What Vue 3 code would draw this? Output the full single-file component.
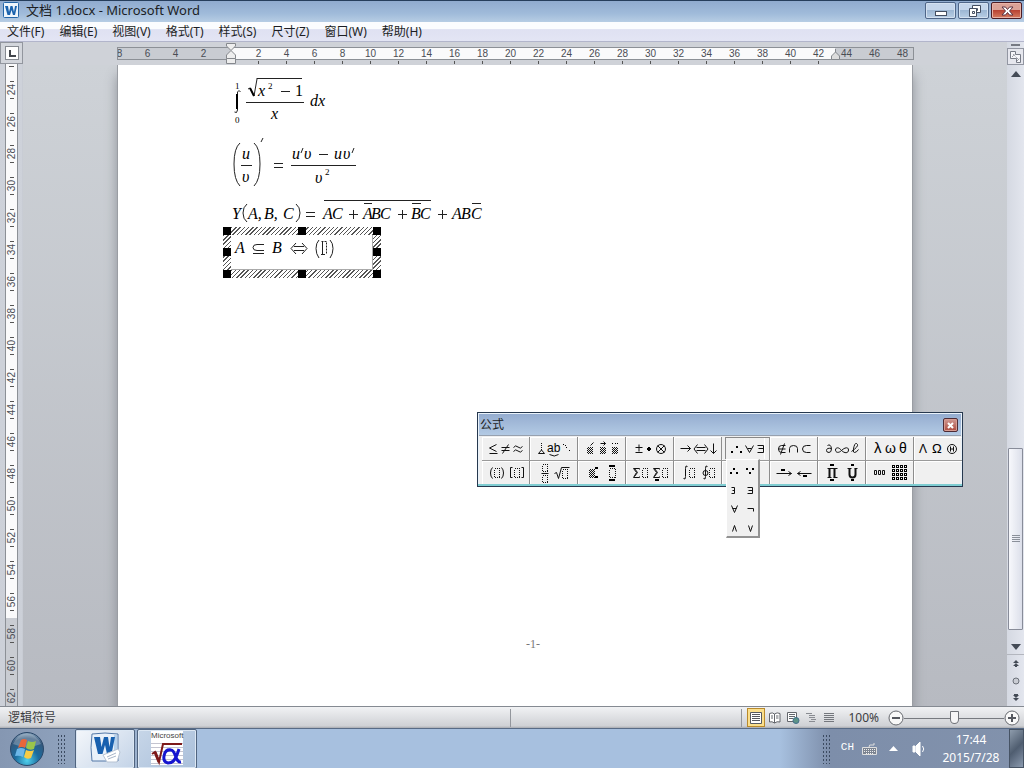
<script setup>
import { ref } from 'vue'

const menus = ['文件(F)', '编辑(E)', '视图(V)', '格式(T)', '样式(S)', '尺寸(Z)', '窗口(W)', '帮助(H)']
const leftMarks = [8, 6, 4, 2]
const rightMarks = Array.from({ length: 24 }, (_, i) => (i + 1) * 2)
const sideMarks = Array.from({ length: 20 }, (_, i) => 24 + i * 2)
const zoom = ref(50)

// Each icon: line (stroked path), fill (solid path), slots (dotted boxes), shade (checkered boxes), text
const tools = [
  { name: '关系符号', line: 'M14 7L7 10.500L14 14M7 16H15M19 10H27M19 13H27M26 7L20 16M31 10Q33 7 35.500 9.500T40 9M31 14Q33 11 35.500 13.500T40 13' },
  { name: '间距和省略号', line: 'M8 16H14L11 12.500ZM19 17Q24 20 28 17', dash: 'M11 5V12', fill: 'M33 7h1v1h-1zM36 10h1v1h-1zM39 13h1v1h-1zM35 8h1v1h-1z', text: [[17, 15, 12, 'ab']] },
  { name: '修饰符号', shade: [[9, 10, 6, 7], [22, 10, 6, 7], [34, 10, 6, 7]], line: 'M12 8L15 5M22 6H27M25 4L27 6L25 8', fill: 'M34 6h1v1h-1zM37 6h1v1h-1zM39 6h1v1h-1z' },
  { name: '运算符号', line: 'M9 10H16M12.500 7V14M9 15H16M31 8L38 15M38 8L31 15M30 11.500A4.500 4.500 0 1 0 39 11.500A4.500 4.500 0 1 0 30 11.500', fill: 'M22 10h2v1h1v2h-1v1h-2v-1h-1v-2h1z' },
  { name: '箭头符号', line: 'M6 11H16M13 8L16 11L13 14M22 10H31M22 13H31M23 7L19.500 11.500L23 16M30 7L33.500 11.500L30 16M39 6V16M36 13L39 16L42 13' },
  { name: '逻辑符号', active: true, fill: 'M9 14h2v2h-2zM14 9h2v2h-2zM18 14h2v2h-2z', line: 'M23 8L27 15L31 8M25 11H29M35 8H41V15H35M36 11H41' },
  { name: '集合论符号', line: 'M15 8H11Q8 8 8 11.500T11 15H15M8 11.500H15M14 6L10 17M19 15V11Q19 8 23 8T27 11V15M40 8H36Q32 8 32 11.500T36 15H40' },
  { name: '其他符号', line: 'M9 8Q12 6 13 11Q13 15 10.500 15T8 13Q8 10 13 11M23 13C20 9 17 10 17 12.500S20 16 23 13S30 9 30 12.500S26 16 23 13M33 14Q40 9 39 7Q37 4 35.500 9Q34 15 36 15T40 12' },
  { name: '小写希腊字母', text: [[8, 16, 15, 'λ'], [19, 16, 14, 'ω'], [33, 16, 14, 'θ']] },
  { name: '大写希腊字母', text: [[5, 16, 12, 'Λ'], [18, 16, 13, 'Ω']], line: 'M33 11.500A4.500 4.500 0 1 0 42 11.500A4.500 4.500 0 1 0 33 11.500M36 9V14M39 9V14M36 11.500H39' },
  { name: '围栏模板', slots: [[12, 7, 5, 9], [32, 7, 5, 9]], line: 'M10 6Q8 8 8 11.500T10 17M19 6Q21 8 21 11.500T19 17M30 6H28V16H30M39 6H41V16H39' },
  { name: '分式和根式模板', slots: [[12, 3, 5, 7], [12, 14, 5, 7], [32, 8, 5, 9]], line: 'M11 12H18M24 12L26 11L28 17L31 6H39' },
  { name: '上标和下标模板', shade: [[11, 8, 6, 9]], slots: [[31, 7, 6, 9]], fill: 'M17 6h3v2h-3zM17 15h3v2h-3zM31 4h6v2h-6zM31 18h6v2h-6z' },
  { name: '求和模板', slots: [[16, 7, 5, 9], [36, 7, 5, 9]], line: 'M13 8V7H7L10 11L7 16H13V15M33 8V7H27L30 11L27 16H33V15M8 7L11 11L8 15M28 7L31 11L28 15', fill: 'M29 18h4v2h-4z' },
  { name: '积分模板', slots: [[15, 7, 5, 9], [35, 7, 5, 9]], line: 'M13 5Q11 3 11 7V15Q11 19 9 17M33 5Q31 3 31 7V15Q31 19 29 17M28.500 11.500A2.500 2.500 0 1 0 33.500 11.500A2.500 2.500 0 1 0 28.500 11.500' },
  { name: '底线和顶线模板' },
  { name: '标签箭头模板', line: 'M6 12H21M18 10L21 12L18 14M27 12H41M30 10L27 12L30 14', fill: 'M11 8h4v2h-4zM33 14h4v2h-4z' },
  { name: '乘积和集合论模板', bold: 'M11 7V16M16 7V16M31 7V13Q31 16 34 16T37 13V7', line: 'M9 7H19M9 16H13M15 16H19M29 7H33M36 7H39', fill: 'M12 3h4v2h-4zM12 18h4v2h-4zM33 3h3v2h-3zM33 18h3v2h-3z' },
  { name: '矩阵模板', line: 'M8 9H10V13H8ZM12 9H14V13H12ZM16 9H18V13H16Z', grid: true },
  { name: '空白模板' }
]

const logic = [
  { name: '所以', fill: 'M3 12h2v2h-2zM6 8h2v2h-2zM9 12h2v2h-2z' },
  { name: '因为', fill: 'M3 8h2v2h-2zM6 12h2v2h-2zM9 8h2v2h-2z' },
  { name: '使得', line: 'M4 8H7V14H4M5 11H7' },
  { name: '存在', line: 'M4 8H9V14H4M5 11H9' },
  { name: '任意', line: 'M4 7L7 14L10 7M5 10H9' },
  { name: '非', line: 'M4 10H10V13' },
  { name: '与', line: 'M5 14L7 8L9 14' },
  { name: '或', line: 'M5 8L7 14L9 8' }
]
const cells = Array.from({ length: 16 }, (_, i) => ({ x: 26 + (i % 4) * 4, y: 4 + Math.floor(i / 4) * 4 }))
</script>

<template>
  <div class="desktop">
    <header class="titlebar">
      <svg class="wicon" width="16" height="16" viewBox="0 0 16 16" aria-hidden="true">
        <rect x="0.500" y="0.500" width="15" height="15" rx="1" fill="#eef5fc" stroke="#2466a8" />
        <path d="M2 4H5L6 10L7.500 4H9.500L11 10L12 4H14L12 13H10L8.500 8L7 13H4.500Z" fill="#1b63ae" />
      </svg>
      <h1>文档 1.docx - Microsoft Word</h1>
      <div class="winbtns">
        <button aria-label="最小化"><svg width="30" height="16"><rect x="9.500" y="8.500" width="11" height="4" fill="#fff" stroke="#444e61" /></svg></button>
        <button aria-label="还原"><svg width="30" height="16" fill="#fff" stroke="#444e61"><path d="M13.500 2.500H21.500V9.500H13.500Z" /><path d="M16.500 5.500H18.500V7.500H16.500Z" /><path d="M10.500 5.500H17.500V13.500H10.500Z" /><path d="M13.500 8.500H15.500V10.500H13.500Z" /></svg></button>
        <button class="close" aria-label="关闭"><svg width="30" height="16"><path d="M10 4H13.500L15.500 6.500L17.500 4H21L17.500 8L21 12H17.500L15.500 9.500L13.500 12H10L13.500 8Z" fill="#fff" stroke="#5b3240" /></svg></button>
      </div>
    </header>

    <nav class="menubar"><button v-for="m in menus" :key="m">{{ m }}</button></nav>

    <main class="work">
      <div class="corner"><button aria-label="制表符"><svg width="12" height="12"><path d="M4 3V9H10" fill="none" stroke="#42464c" stroke-width="2" /></svg></button></div>

      <div class="hruler">
        <div class="hscale">
          <div class="neg"><span v-for="n in leftMarks" :key="n">{{ n }}</span></div>
          <div class="pos"><span v-for="n in rightMarks" :key="n">{{ n }}</span></div>
          <svg class="indent" width="12" height="22" viewBox="0 0 12 22" stroke="#85888d" fill="#eee"><path d="M1.500 .5H10.500V3L6 7.500L1.500 3Z" /><path d="M1.500 15.500V12L6 7.500L10.500 12V15.500Z" /><path d="M1.500 15.500H10.500V20.500H1.500Z" /></svg>
          <svg class="indent end" width="12" height="12" viewBox="0 0 12 12" stroke="#85888d" fill="#ddd"><path d="M5.500 0V3L9.500 7V10.500H1.500V7L5.500 3" /></svg>
        </div>
      </div>

      <div class="vruler"><div class="vscale">
        <span v-for="n in sideMarks" :key="n" :class="{ off: n > 56 }"><b>{{ n }}</b></span>
      </div></div>

      <section class="canvas">
        <article class="page">
          <svg class="eq" width="110" height="50" viewBox="230 76 110 50">
            <g class="m"><text x="258" y="96">x</text><text x="271" y="119">x</text><text x="310" y="106">dx</text></g>
            <g class="r"><text x="295" y="96">1</text></g>
            <g class="s"><text x="235" y="89">1</text><text x="235" y="123">0</text><text x="268" y="89">2</text></g>
            <path class="ln" d="M246 102.500H304M256.500 78.500H302M281 91.500H290" />
            <path class="ln" d="M248 89L250 88L254 96L257 79" /><path class="thick" d="M250 88L254 96" />
            <path class="ln" d="M240.500 92Q239 89 237.500 92V110Q237 114 234.500 112" /><path class="thick" d="M237 94V109" />
          </svg>
          <svg class="eq second" width="140" height="56" viewBox="230 134 140 56">
            <g class="m"><text x="242" y="159">u</text><text x="242" y="182">υ</text><text x="292" y="159">u</text><text x="304" y="159">υ</text><text x="334" y="159">u</text><text x="343" y="159">υ</text><text x="315" y="183">υ</text></g>
            <g class="s"><text x="325" y="175">2</text></g>
            <path class="ln" d="M241 165.500H252M291 165.500H356M274 163.500H283M274 167.500H283M319 154.500H328" />
            <path class="ln" d="M240 143Q234 148 234 164T240 186M254 143Q260 148 260 164T254 186M263 138L261 142M303 148L301 153M354 148L352 153" />
          </svg>
          <svg class="eq third" width="260" height="30" viewBox="230 196 260 30">
            <g class="m"><text x="232" y="219">Y</text><text x="248" y="219">A,</text><text x="264" y="219">B,</text><text x="283" y="219">C</text><text x="323" y="219">A</text><text x="332" y="219">C</text><text x="363" y="219">A</text><text x="371" y="219">B</text><text x="380" y="219">C</text><text x="411" y="219">B</text><text x="420" y="219">C</text><text x="452" y="219">A</text><text x="461" y="219">B</text><text x="471" y="219">C</text></g>
            <path class="ln" d="M324 200.500H431M364 203.500H372M412 203.500H421M472 203.500H481M306 212.500H315M306 216.500H315M349 214.500H358M353.500 210V219M398 214.500H407M402.500 210V219M438 214.500H447M442.500 210V219" />
            <path class="ln" d="M247 204Q243 207 243 213T247 222M296 204Q300 207 300 213T296 222" />
          </svg>
          <div class="frame">
            <div class="inner">
              <svg width="120" height="30" viewBox="231 235 120 30">
                <g class="m"><text x="235" y="253">A</text><text x="272" y="253">B</text></g>
                <path class="ln" d="M264 244.500H257Q253 244.500 253 247.500T257 250.500H264M253 253.500H264M294 246.500H304M294 250.500H304M296 243L291 248.500L296 254M302 243L307 248.500L302 254M319 240Q316 243 316 248.500T319 258M330 240Q333 243 333 248.500T330 258M322.500 241V254M321 254.500H325" />
                <path class="ln" stroke-dasharray="2 1" d="M321.500 241.500H326.500V254" />
              </svg>
            </div>
            <i v-for="h in 8" :key="h" :class="'h' + h"></i>
          </div>
          <footer>-1-</footer>
        </article>
      </section>

      <aside class="scroll">
        <span class="split"></span>
        <button class="rulerbtn" aria-label="标尺"><svg width="14" height="14" fill="#f6f6fa" stroke="#777b86"><path d="M1.500 1.500H6.500V4.500H11.500V12.500H7.500V8.500H1.500Z" /><path d="M4 4L10 10M3 7L7 3M8 11L11 8" stroke-dasharray="1 1" /></svg></button>
        <button class="arr" aria-label="向上"><svg width="10" height="6"><path d="M0 6L5 0L10 6Z" fill="#444b56" /></svg></button>
        <div class="track"><button class="thumb" aria-label="滚动"><svg width="8" height="8"><path d="M0 .5H8M0 2.500H8M0 4.500H8M0 6.500H8" stroke="#8b909a" /></svg></button></div>
        <button class="arr down" aria-label="向下"><svg width="10" height="6"><path d="M0 0L5 6L10 0Z" fill="#444b56" /></svg></button>
        <button class="nav" aria-label="上一页"><svg width="8" height="8" fill="#444b56"><path d="M4 0L7 3H1ZM4 3L7 6H1Z" /><path d="M3 5H5V7H3Z" /></svg></button>
        <button class="nav" aria-label="选择浏览对象"><svg width="8" height="8"><circle cx="4" cy="4" r="3" fill="#c9ccd3" stroke="#6b7079" /></svg></button>
        <button class="nav" aria-label="下一页"><svg width="8" height="8" fill="#444b56"><path d="M1 1H7L4 4ZM1 4H7L4 7Z" /><path d="M2 0H6V1H2Z" /></svg></button>
      </aside>
    </main>

    <footer class="status">
      <span class="hint">逻辑符号</span>
      <span class="rest"></span>
      <div class="views">
        <button class="on" aria-label="页面视图"><svg width="12" height="12"><path d="M.5 .5H11.500V11.500H.5Z" fill="#fff" stroke="#55585f" /><path d="M2 2.500H10M2 4.500H10M2 6.500H10M2 8.500H10" stroke="#55585f" /></svg></button>
        <button aria-label="阅读版式"><svg width="12" height="12" fill="#fff" stroke="#63666c"><path d="M.5 1.500Q3.500 0 5.500 2Q8 0 11 1.500V10Q8 9 5.500 11Q3 9 .5 10ZM5.500 2V11M2 4H4M2 6H4M7 4H9.500M7 6H9.500" /></svg></button>
        <button aria-label="Web 版式"><svg width="13" height="12"><path d="M.5 .5H9.500V9.500H.5Z" fill="#fff" stroke="#63666c" /><path d="M2 2.500H8M2 4.500H8M2 6.500H6" stroke="#63666c" /><circle cx="9" cy="8.500" r="3" fill="#5c9387" stroke="#426f8c" /></svg></button>
        <button aria-label="大纲"><svg width="12" height="12" stroke="#898c92"><path d="M1 1.500H7M4 3.500H10M4 5.500H10M6 7.500H11M4 9.500H10" /></svg></button>
        <button aria-label="草稿"><svg width="12" height="12" stroke="#74777d"><path d="M1 1.500H11M1 3.500H11M1 5.500H11M1 7.500H11M1 9.500H11" /></svg></button>
      </div>
      <button class="pct">100%</button>
      <button class="round" aria-label="缩小"><svg width="16" height="16"><circle cx="8" cy="8" r="7" fill="#f8f8f8" stroke="#66696f" /><path d="M4 8H12" stroke="#55585f" stroke-width="2" /></svg></button>
      <input v-model="zoom" type="range" min="0" max="100" aria-label="缩放">
      <button class="round" aria-label="放大"><svg width="16" height="16"><circle cx="8" cy="8" r="7" fill="#f8f8f8" stroke="#66696f" /><path d="M4 8H12M8 4V12" stroke="#55585f" stroke-width="2" /></svg></button>
    </footer>

    <div class="taskbar">
      <button class="start" aria-label="开始"><svg width="36" height="36" viewBox="0 0 36 36">
        <defs><radialGradient id="orb" cx=".5" cy=".85" r=".9"><stop offset="0" stop-color="#4fd0ec" /><stop offset=".4" stop-color="#1c6c9f" /><stop offset=".75" stop-color="#34587c" /><stop offset="1" stop-color="#9fb9cf" /></radialGradient></defs>
        <circle cx="18" cy="18" r="16.500" fill="url(#orb)" stroke="#2b4869" />
        <path d="M4 13Q9 2 18 2.500T32 13Q18 19 4 13Z" fill="#fff" opacity=".25" />
        <path d="M12 9Q15 7 18 9L16 17Q13 15 9 17Z" fill="#e9673b" /><path d="M19 10Q23 12 27 10L25 18Q21 20 17 17Z" fill="#9ac54b" /><path d="M8 18Q12 16 16 18L14 26Q10 24 6 25Z" fill="#6db7e8" /><path d="M17 19Q21 21 25 19L22 27Q18 29 15 26Z" fill="#f7cc45" />
      </svg></button>
      <span class="grip"></span>
      <button class="task first" aria-label="Word"><svg width="32" height="32" viewBox="0 0 32 32">
        <path d="M3 2Q16 0 29 2V29H3Q1 16 3 2Z" fill="#e9f1fa" stroke="#5479a8" /><path d="M25 3H28V20H25Z" fill="#b8d2ec" />
        <path d="M5 5H11L12.500 15L15 5H19L20.500 15L22 5H26L22.500 22H18L16 13L13.500 22H9Z" fill="#1860af" />
        <path d="M14 23L29 17L31 20L28 30H18Z" fill="#fff" stroke="#b7c3d3" /><path d="M18 25L27 21M19 27L27 24" stroke="#a8b6c9" />
      </svg></button>
      <button class="task" aria-label="Microsoft 公式"><svg class="formula" width="32" height="34" viewBox="0 0 32 34">
        <rect width="32" height="34" fill="#fff" /><path d="M0 12.500H32M0 16.500H32M0 20.500H32M0 24.500H32M0 28.500H32M0 32.500H32" stroke="#c4c4cf" />
        <text x="0" y="7" font-size="8" fill="#444" font-family="Liberation Sans, sans-serif">Microsoft</text>
        <path d="M1 23L4 21L8 31L12 13H31" fill="none" stroke="#7d1919" stroke-width="2" /><path d="M4 21L8 31" stroke="#7d1919" stroke-width="3" />
        <path d="M28 18C24 31 21 32 17 32Q12 31 13 25Q14 18 20 19C25 19 24 32 30 31" fill="none" stroke="#1414cf" stroke-width="3" />
      </svg></button>
      <div class="tray">
        <span class="grip"></span>
        <button class="lang">CH</button>
        <button class="kb" aria-label="键盘"><svg width="15" height="14"><path d="M7 5Q7 2 10 3T12 1" fill="none" stroke="#ddd" /><path d="M.5 5.500H14.500V12.500H.5Z" fill="#7c8491" stroke="#dedede" /><path d="M2 7.500H13M2 9.500H13M4 11.500H11" stroke="#eee" stroke-dasharray="1 1" /></svg></button>
        <button class="up" aria-label="显示隐藏的图标"><svg width="9" height="5"><path d="M0 5L4.500 0L9 5Z" fill="#fff" /></svg></button>
        <button class="vol" aria-label="音量"><svg width="14" height="14" stroke="#fff" fill="none"><path d="M1 4H3V10H1ZM4 4L8 0V14L4 10Z" fill="#fff" /><path d="M10.500 4Q13 7 10.500 10" /></svg></button>
        <div class="clock"><time>17:44</time><time>2015/7/28</time></div>
        <button class="peek" aria-label="显示桌面"></button>
      </div>
    </div>

    <section class="palette" aria-label="公式">
      <header><h2>公式</h2><button aria-label="关闭"><svg width="13" height="12"><path d="M4 4L9 9M9 4L4 9" stroke="#fff" stroke-width="2" /></svg></button></header>
      <div class="tools">
        <div v-for="t in tools" :key="t.name" class="slot">
          <button :class="{ active: t.active }" :aria-label="t.name">
            <svg width="48" height="22" viewBox="0 0 48 22">
              <defs><pattern id="chk" width="2" height="2" patternUnits="userSpaceOnUse"><path d="M0 0h1v1h-1zM1 1h1v1h-1z" fill="#111" /></pattern></defs>
              <g transform="translate(.5 .5)">
                <path v-if="t.line" class="ic" :d="t.line" />
                <path v-if="t.dash" class="ic dots" :d="t.dash" />
                <path v-if="t.bold" class="ic wide" :d="t.bold" />
                <rect v-for="s in t.slots" :key="s.join()" class="ic dots" :x="s[0]" :y="s[1]" :width="s[2]" :height="s[3]" />
                <template v-if="t.grid"><rect v-for="c in cells" :key="c.x + '-' + c.y" :x="c.x" :y="c.y" width="2" height="2" fill="#fff" stroke="#000" /></template>
              </g>
              <rect v-for="s in t.shade" :key="s.join()" :x="s[0]" :y="s[1]" :width="s[2]" :height="s[3]" fill="url(#chk)" />
              <path v-if="t.fill" :d="t.fill" />
              <text v-for="w in t.text" :key="w[3]" :x="w[0]" :y="w[1]" :font-size="w[2]">{{ w[3] }}</text>
            </svg>
          </button>
          <div v-if="t.active" class="drop">
            <button v-for="l in logic" :key="l.name" :aria-label="l.name"><svg width="16" height="19"><path v-if="l.fill" :d="l.fill" /><path v-if="l.line" class="ic" transform="translate(.5 .5)" :d="l.line" /></svg></button>
          </div>
        </div>
      </div>
    </section>
  </div>
</template>

<style>
body { margin: 0; overflow: hidden; }
</style>

<style scoped>
* { box-sizing: border-box; }
.desktop { position: relative; height: 100vh; display: flex; flex-direction: column; overflow: hidden; font: 12px/16px "Noto Sans", "Noto Sans CJK SC", sans-serif; color: #1c1e24; }
button { border: 0; padding: 0; margin: 0; background: none; font: inherit; color: inherit; display: flex; align-items: center; justify-content: center; }
svg { display: block; flex: none; }
h1, h2 { margin: 0; font-weight: 400; }

.titlebar { flex: none; height: 22px; display: flex; align-items: center; padding: 0 2px 0 3px; border-top: 1px solid #263e5c; background: linear-gradient(#90abcf, #a0bbda 60%, #b7cde4); }
.wicon { align-self: flex-start; margin-top: 1px; }
h1 { margin-left: 7px; font-size: 13px; line-height: 18px; flex: 1; align-self: flex-start; }
.winbtns { display: flex; gap: 2px; align-self: flex-start; padding-top: 1px; }
.winbtns button { width: 31px; height: 17px; border: 1px solid #4f6688; border-radius: 2px; background: linear-gradient(#c4d5ea 45%, #9db7d4 50%, #b8cee5); box-shadow: inset 0 0 0 1px #d3e0f0; }
.winbtns .close { border-color: #4c1c24; background: linear-gradient(#dba297 45%, #b94434 50%, #d57b60); box-shadow: inset 0 0 0 1px #e8b3a7; }

.menubar { flex: none; height: 19px; display: flex; align-items: center; gap: 15px; padding-left: 7px; background: linear-gradient(#fbfcfe 35%, #dfe1f2 40%, #e3e5f4); }
.menubar button { height: 19px; }

.work { flex: 1; min-height: 0; display: grid; grid-template: 23px minmax(0, 1fr) / 23px minmax(0, 1fr) 17px; background: #cfd2d8; border-top: 1px solid #b2b5cb; }
.corner { height: 22px; border: 1px solid #92969e; display: flex; align-items: center; justify-content: center; background: #d3d6dc; }
.corner button { width: 14px; height: 14px; border: 1px solid #868a91; background: #fff; }
.hruler { display: flex; justify-content: center; padding-top: 5px; }
.hscale { position: relative; width: 797px; height: 13px; display: flex; font: 10px/11px "Liberation Sans", sans-serif; color: #4a4d54; }
.hscale span { flex: none; width: 28px; text-align: center; }
.neg { width: 113px; border: 1px solid #8c9096; border-right: 0; display: flex; overflow: hidden; background: #c9ccd2; }
.neg span:first-child { margin-left: -12px; }
.pos { flex: 1; min-width: 0; border: 1px solid #8c9096; border-left: 0; display: flex; padding-left: 15px; background: linear-gradient(90deg, #fafafb 605px, #c9ccd2 605px); }
.pos span { position: relative; }
.pos span:nth-child(-n+21)::after { content: ""; position: absolute; left: 13px; top: 13px; width: 1px; height: 3px; background: #555; }
.indent { position: absolute; left: 108px; top: -4px; }
.indent.end { left: 713px; top: 2px; }

.vruler { padding: 0 0 0 5px; overflow: hidden; background: linear-gradient(#ced2da, #ccd0d8); margin-top: -1px; border-right: 1px solid #c8ccd4; }
.vscale { width: 13px; height: 100%; border: 1px solid #8c9096; border-width: 0 1px; padding-top: 10px; overflow: hidden; background: linear-gradient(#555, #555) 3px 2px / 5px 1px no-repeat, #fafafb; }
.vscale span { height: 32px; display: flex; align-items: center; justify-content: center; background: linear-gradient(#555, #555) 4px 7px / 4px 1px no-repeat, linear-gradient(#555, #555) 4px 24px / 4px 1px no-repeat; }
.vscale .off { background-color: #c9ccd2; }
.vscale b { writing-mode: vertical-rl; transform: rotate(180deg); font: 10px/11px "Liberation Sans", sans-serif; color: #4a4d54; }

.canvas { display: flex; justify-content: center; background: linear-gradient(#ced2d7, #b7bac1); overflow: hidden; }
.page { width: 794px; flex: none; display: flex; flex-direction: column; padding: 11px 112px 0; background: #fff; box-shadow: 0 0 0 1px #9a9da3, 0 10px 12px #85888f; }
.eq { overflow: visible; }
.second { margin-top: 8px; }
.third { margin-top: 6px; }
.m { font: italic 16px "Liberation Serif", serif; }
.r { font: 16px "Liberation Serif", serif; }
.s { font: 9px "Liberation Serif", serif; }
.ln { fill: none; stroke: #222; }
.thick { fill: none; stroke: #000; stroke-width: 2; }
.frame { position: relative; width: 158px; height: 51px; margin: 1px 0 0 -7px; padding: 8px; background: repeating-linear-gradient(135deg, #555 0 1px, #fff 1px 3px); }
.inner { height: 35px; background: #fff; border: 1px solid #aaa; border-width: 0 1px 1px 0; }
.frame i { position: absolute; width: 8px; height: 8px; background: #000; }
.h1, .h4, .h6 { left: 0; }
.h2, .h7 { left: 75px; }
.h3, .h5, .h8 { right: 0; }
.h1, .h2, .h3 { top: 0; }
.h4, .h5 { top: 21px; }
.h6, .h7, .h8 { bottom: 0; }
.page footer { margin: auto auto 54px; padding-left: 36px; font: 12px/16px "Liberation Serif", serif; color: #777; }

.scroll { grid-column: 3; grid-row: 1 / 3; display: flex; flex-direction: column; background: linear-gradient(90deg, #d5d9e2, #e3e6ee); align-items: stretch; }
.split { height: 2px; margin: 2px 4px 2px; background: #777b84; flex: none; }
.rulerbtn { height: 17px; border: 1px solid #9296a2; flex: none; background: #e6e7ee; }
.arr { height: 18px; flex: none; }
.track { flex: 1; display: flex; flex-direction: column; min-height: 0; }
.track::before { content: ""; flex: 366; }
.track::after { content: ""; flex: 9; }
.thumb { flex: 181; margin: 0 1px 0 1px; border: 1px solid #888c99; border-radius: 1px; background: linear-gradient(90deg, #f7f8fc, #dcdfea); }
.down { height: 16px; border-bottom: 1px solid #b3b6be; }
.nav { height: 17px; flex: none; }

.status { flex: none; height: 22px; display: flex; align-items: center; padding: 0 4px 0 8px; border-top: 1px solid #858a92; background: linear-gradient(#f1f2f4, #cfd1d5 90%, #a9abb0); color: #3b3d42; }
.hint { flex: 505; }
.rest { flex: 232; height: 18px; border-left: 1px solid #93969c; border-right: 1px solid #93969c; }
.views { display: flex; margin-left: 5px; }
.views button { width: 18px; height: 19px; }
.views .on { border: 1px solid #b98a2c; background: #fbdf8c; margin-right: 1px; }
.pct { margin: 0 9px 0 10px; }
.round { width: 16px; height: 16px; flex: none; }
input[type=range] { appearance: none; width: 100px; height: 16px; margin: 0; background: linear-gradient(#777a80, #777a80) 0 8px / 100% 1px no-repeat; }
input[type=range]::-webkit-slider-thumb { appearance: none; width: 9px; height: 13px; border: 1px solid #6e7177; border-radius: 1px 1px 5px 5px; background: #f5f5f6; }

.taskbar { flex: none; height: 40px; display: flex; align-items: center; background: linear-gradient(90deg, #8597b2, #8fa2bd 70px, #a7c0df 200px, #a7c0df 780px, #7d8eaa 830px, #8292ac); border-top: 1px solid #586b86; color: #fff; }
.start { margin: 0 12px 0 9px; }
.grip { width: 9px; height: 30px; background: radial-gradient(circle, #3c4b61 1px, transparent 1px) 0 0 / 3px 4px; }
.task { width: 60px; height: 40px; border: 1px solid #50647f; border-radius: 2px; background: linear-gradient(135deg, #c7d6e8, #a9bfda); box-shadow: inset 0 0 0 1px #dce7f3; align-self: stretch; }
.first { margin: 0 2px 0 9px; background: linear-gradient(135deg, #f4f7fb, #c3d3e7); }
.task svg { margin-bottom: 2px; }
.formula { overflow: visible; }
.tray { margin-left: auto; display: flex; align-items: center; align-self: stretch; }
.lang { margin: 0 8px 3px 10px; font: 11px/14px "Liberation Mono", monospace; }
.kb { margin-right: 12px; }
.up { margin-right: 14px; }
.clock { margin-left: 13px; width: 64px; display: flex; flex-direction: column; align-items: center; line-height: 18px; margin-right: 6px; }
.peek { width: 15px; align-self: stretch; border: 1px solid #465364; background: linear-gradient(135deg, #8e9cac, #4f5d70 50%, #8b9aaf); }

.palette { position: absolute; left: 477px; top: 412px; width: 486px; border: 1px solid #26384e; background: #f0f0f0; box-shadow: inset 0 0 0 1px #e9f2fa; }
.palette header { display: flex; align-items: center; justify-content: space-between; height: 22px; margin: 1px 1px 0; padding: 0 3px 0 1px; background: linear-gradient(#95add0, #b3cae4); border-bottom: 1px solid #97a1af; }
h2 { font-size: 12px; line-height: 18px; }
.palette header button { width: 15px; height: 14px; border: 1px solid #4d2b35; border-radius: 2px; background: linear-gradient(#d09a94, #ad4a3d); box-shadow: inset 0 0 0 1px #d79c92; }
.tools { display: grid; grid-template-columns: repeat(10, minmax(0, 1fr)); padding: 1px 0 0 4px; border-bottom: 2px solid #7fcdd2; }
.slot { position: relative; height: 24px; border-right: 1px solid #8d8d8d; border-bottom: 1px solid #9a9a9a; box-shadow: inset 0 1px #fff, inset 1px 0 #fff; }
.slot:nth-child(10n) { border-right: 0; }
.slot:nth-child(n+11) { border-bottom: 0; height: 23px; }
.slot > button { width: 100%; height: 22px; overflow: hidden; justify-content: flex-start; }
.slot > button.active { box-shadow: inset 3px 0 #f0f0f0, inset 4px 1px #888, inset -4px 0 #f0f0f0, inset -5px 0 #fff; }
.slot text { font-family: "Liberation Sans", sans-serif; }
.ic { fill: none; stroke: #111; }
.wide { stroke-width: 2; }
.dots { stroke-dasharray: 1 1; shape-rendering: crispEdges; }
.drop { position: absolute; left: 4px; top: 22px; width: 34px; display: grid; grid-template-columns: 16px 16px; z-index: 2; background: #f0f0f0; border: 1px solid #fff; border-right: 2px solid #929292; border-bottom: 2px solid #929292; }
.drop button { width: 16px; height: 19px; }
</style>
